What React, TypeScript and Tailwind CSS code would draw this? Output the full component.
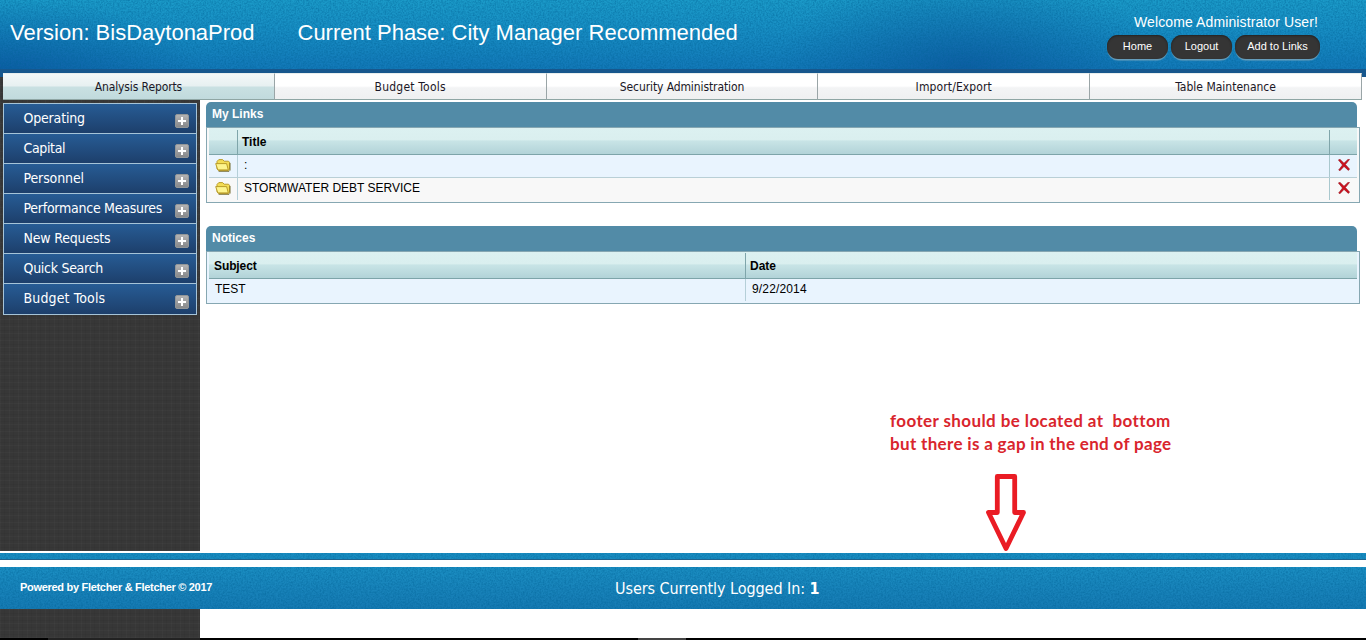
import React from "react";

const tabs = [
  { label: "Analysis Reports", track: "tracking-[-0.12px]" },
  { label: "Budget Tools", track: "tracking-[0.22px]" },
  { label: "Security Administration", track: "tracking-[-0.1px]" },
  { label: "Import/Export", track: "tracking-[0.12px]" },
  { label: "Table Maintenance", track: "tracking-[0px]" },
];

const menu = [
  { label: "Operating", track: "tracking-[-0.18px]" },
  { label: "Capital", track: "tracking-[-0.35px]" },
  { label: "Personnel", track: "tracking-[-0.12px]" },
  { label: "Performance Measures", track: "tracking-[-0.26px]" },
  { label: "New Requests", track: "tracking-[-0.18px]" },
  { label: "Quick Search", track: "tracking-[-0.28px]" },
  { label: "Budget Tools", track: "tracking-[0.14px]" },
];

const tahoma = "font-['DejaVu_Sans_Condensed','DejaVu_Sans',sans-serif] [font-stretch:condensed]";
const theadBg = "bg-[linear-gradient(#dcf1f1_0%,#daefef_45%,#c8e4e6_50%,#b2d3d8_100%)]";

function Grain({ id, opacity }: { id: string; opacity: string }) {
  return (
    <svg className={`pointer-events-none absolute inset-0 h-full w-full ${opacity}`} aria-hidden="true">
      <filter id={id}>
        <feTurbulence type="fractalNoise" baseFrequency="0.6" numOctaves="2" seed="4" />
        <feColorMatrix values="0 0 0 0 0  0 0 0 0 0.12  0 0 0 0 0.3  1.6 0 0 0 -0.55" />
      </filter>
      <rect width="100%" height="100%" filter={`url(#${id})`} />
    </svg>
  );
}

function Plus() {
  return (
    <svg className="h-[14px] w-[14px]" viewBox="0 0 14 14">
      <defs>
        <linearGradient id="plusFill" x1="0" y1="0" x2="0" y2="1">
          <stop offset="0" stopColor="#b5b5b5" />
          <stop offset="1" stopColor="#858789" />
        </linearGradient>
      </defs>
      <rect x="0.5" y="0.5" width="13" height="13" rx="1.5" fill="url(#plusFill)" stroke="#929698" />
      <path d="M7 3v8M3 7h8" stroke="#fff" strokeWidth="2" />
    </svg>
  );
}

function Folder() {
  return (
    <svg className="h-[14px] w-[16px]" viewBox="0 0 16 14">
      <path d="M2 10.5V3.4L3.8 1.6h3.8l1.6 1.6h4.3l1 1v7.2l-1 1H3.5z" fill="#f3dc55" stroke="#b3941f" strokeWidth="0.9" />
      <path d="M0.7 5.6h10.9l1.7 6.3H2.8z" fill="#fdf48e" stroke="#b3941f" strokeWidth="0.9" strokeLinejoin="round" />
      <path d="M15.1 5v7.2l-1.1 1.2H3.6" fill="none" stroke="#6d6326" strokeWidth="0.8" />
    </svg>
  );
}

function Cross() {
  return (
    <svg className="h-[12px] w-[12px]" viewBox="0 0 12 12">
      <path d="M0.4 0.9L1.9 0.3L6 4.2L10.2 0.2L11.5 0.5L7.4 5.6L11.6 10.1L10.4 11.4L6 7.4L1.9 11.8L0.7 11L4.5 6Z" fill="#cf0f1c" stroke="#931722" strokeWidth="0.6" />
    </svg>
  );
}

function PanelTitle({ children }: { children: React.ReactNode }) {
  return (
    <div className="mr-[3px] h-[25px] rounded-t-[5px] bg-[#528ba7] pl-[6px] text-[12px] leading-[24px] font-bold text-white">
      {children}
    </div>
  );
}

function LinkRow({ title, className }: { title: string; className: string }) {
  return (
    <div className={`flex ${className}`}>
      <div className="flex w-[29px] items-start justify-center border-r border-[#b5cfd8] pt-[3px]"><Folder /></div>
      <div className="flex-1 pl-[6px] leading-[20px]">{title}</div>
      <div className="flex w-[28px] items-start justify-center border-l border-[#a9c8ce] pt-[4px]"><Cross /></div>
    </div>
  );
}

const darkCloth =
  "bg-[#373737] bg-[repeating-linear-gradient(0deg,rgba(255,255,255,0.02)_0_1px,transparent_1px_3px,rgba(0,0,0,0.04)_3px_4px,transparent_4px_7px),repeating-linear-gradient(90deg,rgba(255,255,255,0.02)_0_1px,transparent_1px_4px,rgba(0,0,0,0.04)_4px_5px,transparent_5px_9px)]";

const pill =
  "h-[24px] rounded-[11px] bg-[#353535] text-center shadow-[0_2px_1px_-0.5px_#6a9fbb,inset_0_1px_2px_#222]";

export default function App() {
  return (
    <div className="relative flex h-[640px] w-[1366px] flex-col overflow-hidden bg-white font-['Liberation_Sans',Arial,sans-serif] text-[12px] text-black">
      <header className="relative -mb-[4px] h-[77px] shrink-0 bg-[radial-gradient(ellipse_200px_75px_at_0px_74px,rgba(8,74,148,0.6),transparent),radial-gradient(ellipse_190px_100px_at_965px_68px,rgba(8,72,145,0.55),transparent),linear-gradient(#1b9ac8_0%,#188fc4_35%,#137ab9_85%,#1274b3_100%)]">
        <Grain id="grainTop" opacity="opacity-60" />
        <div className="relative flex h-[69px] items-start justify-between">
          <div className="flex pt-[19px] pl-[10px] text-[22px] leading-[28px] text-white">
            <span className="w-[287.5px]">Version: BisDaytonaProd</span>
            <span>Current Phase: City Manager Recommended</span>
          </div>
          <div className="flex flex-col items-end pt-[13px] pr-[46px]">
            <div className="pr-[2px] text-[14px] leading-[18px] tracking-[0.11px] text-white">Welcome Administrator User!</div>
            <div className="mt-[4px] flex gap-[3px] text-[11px] leading-[23px] text-white">
              <span className={`w-[61px] ${pill}`}>Home</span>
              <span className={`w-[61px] ${pill}`}>Logout</span>
              <span className={`w-[85px] ${pill}`}>Add to Links</span>
            </div>
          </div>
        </div>
        <div className="relative h-[8px] bg-[#17578d]" />
      </header>

      <nav className="relative flex h-[27px] shrink-0 pr-[4px]">
        <div className={`mt-[4px] w-[3px] shrink-0 ${darkCloth}`} />
        {tabs.map((t, i) => (
          <div
            key={t.label}
            className={`flex-1 border-t border-r border-b border-t-[#e8eeee] border-r-[#9aa5a7] border-b-[#8fa6a4] pt-px text-center leading-[25px] ${tahoma} text-[12px] text-[#1b1726] ${t.track} ${
              i === 0
                ? "bg-[linear-gradient(#f4f8f8_0%,#e7f0f1_48%,#c9e0e2_52%,#c1dadd_100%)]"
                : "bg-[linear-gradient(#ffffff_0%,#ffffff_48%,#f3f4f5_55%,#eff0f1_100%)]"
            }`}
          >
            {t.label}
          </div>
        ))}
      </nav>

      <div className="flex h-[451px] shrink-0">
        <aside className={`w-[200px] shrink-0 pt-[3px] pr-[3px] pl-[3px] ${darkCloth}`}>
          <ul className="flex flex-col border border-b-0 border-[#a6c4d8]">
            {menu.map((m, i) => (
              <li
                key={m.label}
                className={`flex justify-between border-b border-[#a6c4d8] bg-[linear-gradient(#275c95,#1d3f6b)] pr-[7px] pl-[19.5px] ${i === 6 ? "h-[31px]" : "h-[30px]"}`}
              >
                <span className={`text-[14px] leading-[28px] whitespace-nowrap text-white ${tahoma} ${m.track}`}>{m.label}</span>
                <span className={i === 6 ? "pt-[11px]" : "pt-[10px]"}><Plus /></span>
              </li>
            ))}
          </ul>
        </aside>

        <main className="flex-1 pt-[2px] pr-[6px] pl-[6px]">
          <section>
            <PanelTitle>My Links</PanelTitle>
            <div className="h-[76px] border border-[#86a7b2] bg-[#f8f8f8] px-[2px]">
              <div className={`flex h-[27px] border-b border-[#7da4a9] font-bold ${theadBg}`}>
                <div className="mt-[2px] w-[29px] border-r border-[#7fa5aa]" />
                <div className="flex-1 pl-[4px] leading-[28px]">Title</div>
                <div className="mt-[2px] w-[28px] border-l border-[#7fa5aa]" />
              </div>
              <LinkRow title=":" className="h-[23px] border-b border-[#b9cfd6] bg-[#e9f4fe]" />
              <LinkRow title="STORMWATER DEBT SERVICE" className="h-[22px]" />
            </div>
          </section>

          <section className="mt-[23px]">
            <PanelTitle>Notices</PanelTitle>
            <div className="h-[53px] border border-[#86a7b2] bg-[#e9f4fe] px-[2px]">
              <div className={`flex h-[27px] border-b border-[#7da4a9] font-bold leading-[28px] ${theadBg}`}>
                <div className="mt-[1px] w-[537px] border-r border-[#7fa5aa] pl-[5px] leading-[26px] tracking-[-0.1px]">Subject</div>
                <div className="pl-[4px]">Date</div>
              </div>
              <div className="flex h-[22px] leading-[20px]">
                <div className="w-[537px] border-r border-[#b5cfd8] pl-[6px]">TEST</div>
                <div className="pl-[6px] tracking-[0.15px]">9/22/2014</div>
              </div>
            </div>
          </section>
        </main>
      </div>

      <footer className="flex shrink-0 flex-col pt-[2px]">
        <div className="relative h-[7px] border-b border-[#22658f] bg-[#198cc0]">
          <Grain id="grainRule" opacity="opacity-50" />
        </div>
        <div className="relative mt-[7px] h-[42px] bg-[linear-gradient(#1b8ec2,#167ab3)]">
          <Grain id="grainFoot" opacity="opacity-60" />
          <div className="relative flex h-full items-start text-white">
            <span className="w-[615px] pl-[20px] text-[11px] leading-[40px] font-bold tracking-[-0.3px]">Powered by Fletcher &amp; Fletcher © 2017</span>
            <span className={`text-[16px] leading-[44px] tracking-[-0.06px] ${tahoma}`}>
              Users Currently Logged In: <b>1</b>
            </span>
          </div>
        </div>
      </footer>
      <div className={`h-[29px] w-[200px] shrink-0 ${darkCloth}`} />
      <div className="flex h-[2px] shrink-0 bg-black">
        <div className="ml-[48px] w-[152px] bg-[#222]" />
        <div className="ml-[438px] w-[48px] bg-[#444]" />
      </div>

      <div className="absolute top-[409px] left-[890px] font-['Lato',sans-serif] text-[17px] leading-[23px] font-bold whitespace-pre text-[#d9252d]">
        <div className="tracking-[0.4px]">footer should be located at  bottom</div>
        <div className="tracking-[0.33px]">but there is a gap in the end of page</div>
      </div>
      <svg className="absolute top-[472px] left-[984px] h-[82px] w-[44px]" viewBox="0 0 44 82">
        <path d="M13.3 4.5H30.7V40.5H39.5L22 76.5L4.5 40.5H13.3Z" fill="#fff" stroke="#ea1c24" strokeWidth="4.8" strokeLinejoin="round" />
      </svg>
    </div>
  );
}
